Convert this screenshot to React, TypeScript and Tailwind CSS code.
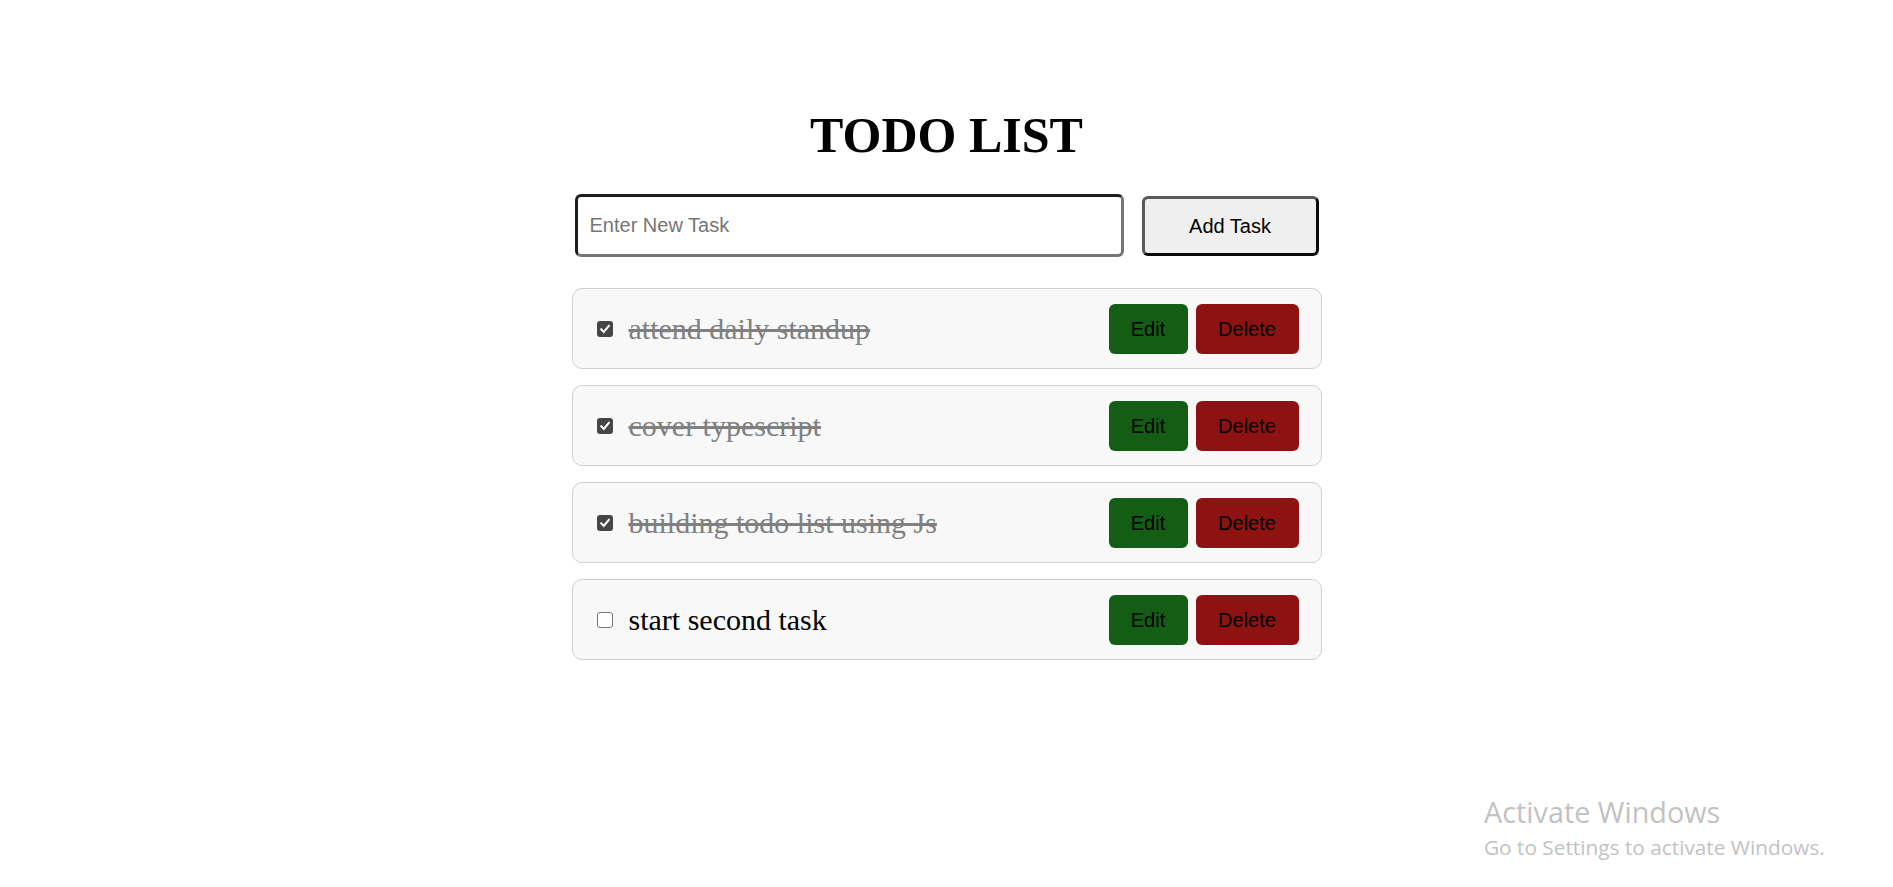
import React from "react";

type Task = { text: string; done: boolean };

const tasks: Task[] = [
  { text: "attend daily standup", done: true },
  { text: "cover typescript", done: true },
  { text: "building todo list using Js", done: true },
  { text: "start second task", done: false },
];

function Check({ checked }: { checked: boolean }) {
  if (checked) {
    return (
      <span className="flex h-[16px] w-[16px] shrink-0 items-center justify-center rounded-[3px] bg-[#464646]">
        <svg width="12" height="12" viewBox="0 0 12 12" fill="none">
          <path d="M2.2 6.3 L4.8 8.9 L9.8 2.8" stroke="#ffffff" strokeWidth="2" strokeLinecap="square" />
        </svg>
      </span>
    );
  }
  return <span className="block h-[16px] w-[16px] shrink-0 rounded-[3px] border border-[#767676] bg-white" />;
}

export default function App() {
  return (
    <div className="relative min-h-[887px] w-full bg-white">
      <div className="mx-auto flex w-[750px] flex-col items-center pt-[108px]">
        <h1 className="m-0 text-[50px] font-bold leading-[55px] text-black" style={{ fontFamily: '"Liberation Serif", "Times New Roman", serif' }}>
          TODO LIST
        </h1>
        <div className="mt-[31px] flex w-[744px] items-center gap-[18px]" style={{ fontFamily: '"Liberation Sans", Arial, sans-serif' }}>
          <input
            type="text"
            placeholder="Enter New Task"
            className="h-[63px] w-[549px] rounded-[6px] border-[3px] border-t-[#1e1e1e] border-l-[#1e1e1e] border-b-[#767676] border-r-[#767676] bg-white px-[12px] text-[20px] text-black outline-none placeholder:text-[#757575]"
          />
          <button className="h-[60px] w-[177px] rounded-[6px] border-[3px] border-t-[#5a5a5a] border-l-[#5a5a5a] border-b-[#0a0a0a] border-r-[#0a0a0a] bg-[#efefef] text-[20px] text-black">
            Add Task
          </button>
        </div>
        <div className="mt-[31px] flex w-[750px] flex-col gap-[16px]">
          {tasks.map((t) => (
            <div
              key={t.text}
              className="flex h-[81px] items-center justify-between rounded-[10px] border border-[#d0d0d0] bg-[#f8f8f8] pl-[24px] pr-[22px]"
            >
              <div className="flex items-center gap-[16px]">
                <Check checked={t.done} />
                <span
                  className={
                    t.done
                      ? "text-[30px] leading-[33px] text-[#808080] line-through decoration-[#808080]"
                      : "text-[30px] leading-[33px] text-black"
                  }
                  style={{ fontFamily: '"Liberation Serif", "Times New Roman", serif' }}
                >
                  {t.text}
                </span>
              </div>
              <div className="flex items-center gap-[8px]" style={{ fontFamily: '"Liberation Sans", Arial, sans-serif' }}>
                <button className="h-[50px] w-[79px] rounded-[6px] bg-[#135d14] text-[20px] text-black">Edit</button>
                <button className="h-[50px] w-[103px] rounded-[6px] bg-[#8e1212] text-[20px] text-black">Delete</button>
              </div>
            </div>
          ))}
        </div>
      </div>
      <div
        className="absolute left-[1484px] top-[795px] flex flex-col text-[#c2c2c2]"
        style={{ fontFamily: '"Open Sans", "Noto Sans", sans-serif' }}
      >
        <span className="text-[28.8px] leading-[34px]">Activate Windows</span>
        <span className="text-[20.8px] leading-[36px]">Go to Settings to activate Windows.</span>
      </div>
    </div>
  );
}
